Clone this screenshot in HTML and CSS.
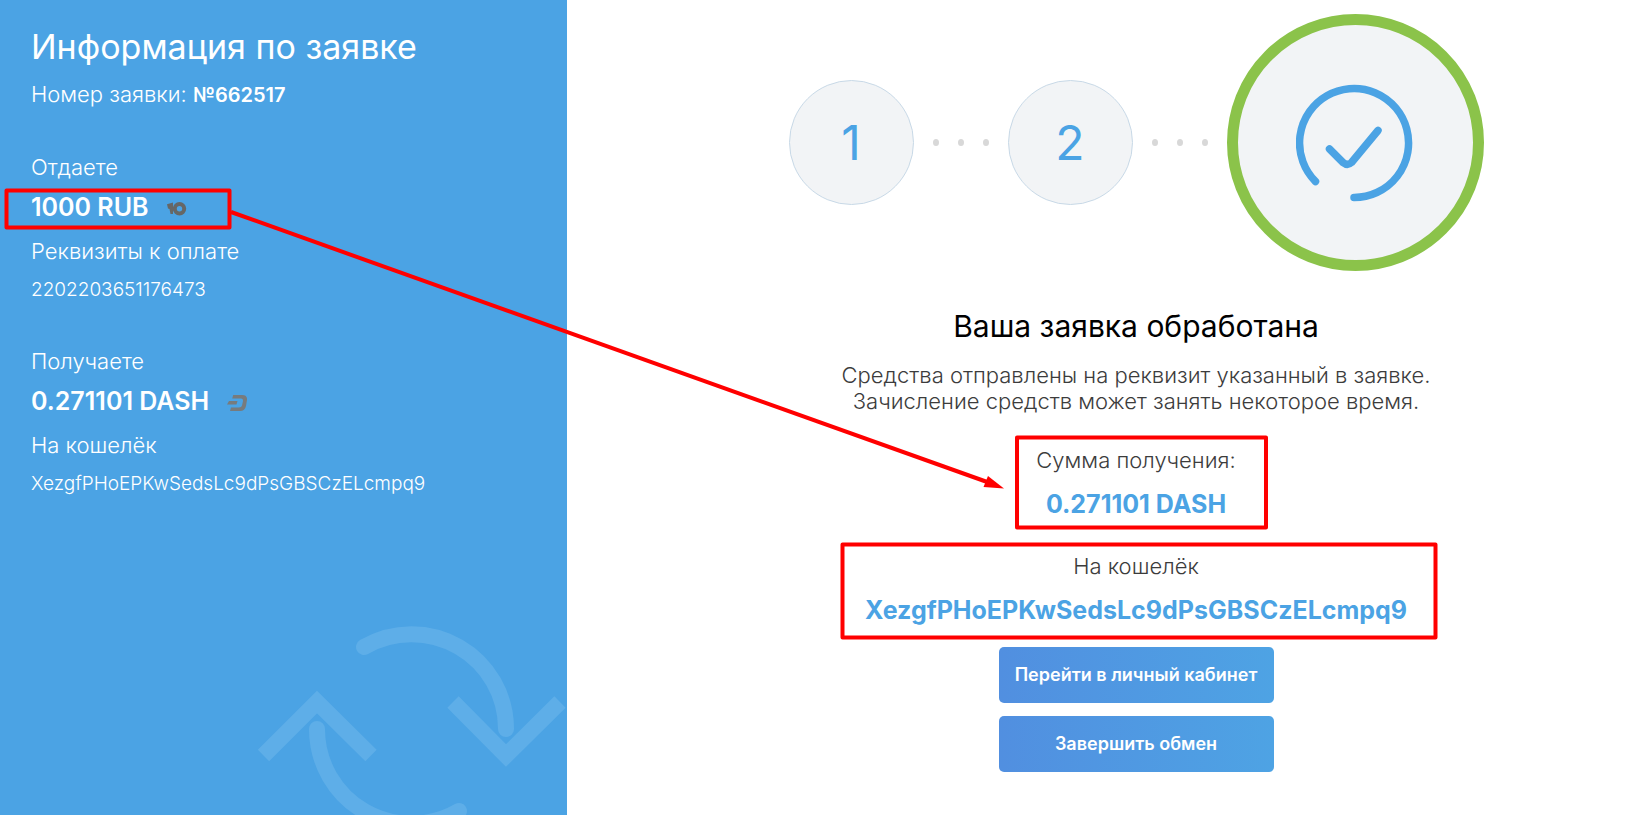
FILE: index.html
```html
<!DOCTYPE html>
<html lang="ru">
<head>
<meta charset="utf-8">
<title>Информация по заявке</title>
<link rel="stylesheet" href="styles.css">
</head>
<body>
<div class="page">
  <aside class="info">
    <svg class="info-art" viewBox="0 0 310 195" width="310" height="195" aria-hidden="true">
      <g fill="none" stroke="#5eaee8" stroke-width="16">
        <path stroke-linecap="round" d="M107 27A94.500 94.500 0 0 1 249 109"/>
        <path d="M196 82L249 135.500L303 82"/>
        <path stroke-linecap="round" d="M60 109A94.500 94.500 0 0 0 202 191"/>
        <path d="M6.500 135.500L60 82L114 135.500"/>
      </g>
    </svg>
    <h1 class="info-title">Информация по заявке</h1>
    <p class="label">Номер заявки: <strong>№662517</strong></p>
    <section class="transfer">
      <p class="label">Отдаете</p>
      <p class="amount">1000 RUB
        <svg class="coin" viewBox="0 0 20 16" width="20" height="16" aria-hidden="true"><path fill="#666766" d="M0 3.200L6 1.500V13H3.500L2.500 8L1 7.500Z"/><circle cx="12.500" cy="7.700" r="4.700" fill="none" stroke="#666766" stroke-width="4"/><path stroke="#666766" stroke-width="3" d="M5 7.700H9"/></svg>
      </p>
      <p class="label label-details">Реквизиты к оплате</p>
      <p class="details">2202203651176473</p>
    </section>
    <section class="transfer">
      <p class="label">Получаете</p>
      <p class="amount">0.271101 DASH
        <svg class="coin" viewBox="0 0 20 16" width="20" height="16" aria-hidden="true"><path fill="#777b7d" d="M6.200 0H15Q20.500 0 20 5L19 11Q18 16 13 16H3L4 12.500H12Q14.500 12.500 15 10.500L16 6Q16.200 3.500 14 3.500H5.200ZM2 6H10.500L9.500 9.500H0Z"/></svg>
      </p>
      <p class="label label-details">На кошелёк</p>
      <p class="details">XezgfPHoEPKwSedsLc9dPsGBSCzELcmpq9</p>
    </section>
  </aside>

  <main class="result">
    <div class="steps">
      <span class="step">1</span>
      <span class="dots"><i class="dot"></i><i class="dot"></i><i class="dot"></i></span>
      <span class="step">2</span>
      <span class="dots"><i class="dot"></i><i class="dot"></i><i class="dot"></i></span>
      <span class="step-done">
        <svg viewBox="0 0 118 118" width="118" height="118" role="img" aria-label="Готово">
          <g fill="none" stroke="#4ba3e4" stroke-width="7.500" stroke-linecap="round" stroke-linejoin="round">
            <path d="M58 113.500A54.500 54.500 0 1 0 19.500 97.500"/>
            <path d="M33.500 65L47 78.500Q51.500 82 55.500 78.500L82 46.500"/>
          </g>
        </svg>
      </span>
    </div>
    <h2 class="result-title">Ваша заявка обработана</h2>
    <p class="message">Средства отправлены на реквизит указанный в заявке.<br>Зачисление средств может занять некоторое время.</p>
    <div class="summary">
      <p class="caption">Сумма получения:</p>
      <p class="value">0.271101 DASH</p>
    </div>
    <div class="summary">
      <p class="caption">На кошелёк</p>
      <p class="value">XezgfPHoEPKwSedsLc9dPsGBSCzELcmpq9</p>
    </div>
    <div class="actions">
      <button class="button" type="button">Перейти в личный кабинет</button>
      <button class="button" type="button">Завершить обмен</button>
    </div>
  </main>

  <svg class="marks" viewBox="0 0 1625 815" aria-hidden="true">
    <g fill="none" stroke="#ff0000" stroke-width="4" stroke-linejoin="round">
      <rect x="6.500" y="190.500" width="223" height="37"/>
      <rect x="1017" y="437.500" width="249" height="90"/>
      <rect x="842.500" y="544.500" width="593" height="93"/>
      <path d="M231 212L990 483"/>
    </g>
    <path fill="#ff0000" d="M1004 488.500L983.500 487L988 476Z"/>
  </svg>
</div>
</body>
</html>
```
FILE: styles.css
```css
* {
  box-sizing: border-box;
}

body {
  margin: 0;
  background: #fff;
  font-family: Inter, "Open Sans", sans-serif;
}

h1, h2, p {
  margin: 0;
}

.page {
  position: relative;
  display: grid;
  grid-template-columns: 567fr 1058fr;
  min-height: 100vh;
}

.info {
  position: relative;
  overflow: hidden;
  padding: 27px 31px;
  background: #4ba3e4;
  color: #fff;
}

.info-art {
  position: absolute;
  right: 0;
  bottom: 0;
}

.info-title {
  margin-bottom: 13px;
  font-size: 34px;
  font-weight: 400;
  line-height: 40px;
}

.label {
  font-size: 22px;
  font-weight: 300;
  line-height: 28px;
}

.label strong {
  font-size: 20px;
  font-weight: 600;
  line-height: 20px;
}

.transfer {
  margin-top: 45px;
}

.amount {
  display: flex;
  align-items: center;
  gap: 18px;
  margin: 10px 0 14px;
  font-size: 25px;
  font-weight: 600;
  line-height: 32px;
}

.coin {
  margin-top: 4px;
}

.label-details {
  margin-bottom: 13px;
}

.details {
  font-size: 19px;
  font-weight: 300;
  line-height: 24px;
}

.result {
  display: flex;
  flex-direction: column;
  align-items: center;
  padding: 14px 0 42px 80px;
  text-align: center;
}

.steps {
  display: flex;
  align-items: center;
  margin-bottom: 37px;
}

.step {
  display: grid;
  place-items: center;
  width: 125px;
  height: 125px;
  border: 1px solid #c8d9e7;
  border-radius: 50%;
  background: #f2f4f6;
  color: #4ba3e4;
  font-size: 48px;
  line-height: 56px;
}

.dots {
  display: flex;
  justify-content: center;
  gap: 19px;
  width: 94px;
}

.dot {
  width: 6px;
  height: 7px;
  border-radius: 50%;
  background: #d8d8d8;
}

.step-done {
  display: grid;
  place-items: center;
  width: 257px;
  height: 257px;
  border: 11px solid #8bc34a;
  border-radius: 50%;
  background: #f2f4f6;
}

.result-title {
  margin-bottom: 18px;
  color: #000;
  font-size: 30px;
  font-weight: 400;
  line-height: 36px;
}

.message {
  color: #3c3c3c;
  font-size: 22px;
  font-weight: 300;
  line-height: 26px;
}

.summary {
  margin-top: 32px;
}

.caption {
  margin-bottom: 14px;
  color: #3c3c3c;
  font-size: 22px;
  font-weight: 300;
  line-height: 28px;
}

.value {
  color: #4ba3e4;
  font-size: 25px;
  font-weight: 700;
  line-height: 32px;
}

.actions {
  display: grid;
  gap: 13px;
  width: 275px;
  margin-top: 21px;
}

.button {
  height: 56px;
  border: 0;
  border-radius: 5px;
  background: linear-gradient(90deg, #518fe0, #4ea3e4);
  color: #fff;
  font-family: inherit;
  font-size: 18px;
  font-weight: 600;
  line-height: 24px;
  white-space: nowrap;
}

.marks {
  position: absolute;
  top: 0;
  left: 0;
  width: 100%;
  pointer-events: none;
}
```
